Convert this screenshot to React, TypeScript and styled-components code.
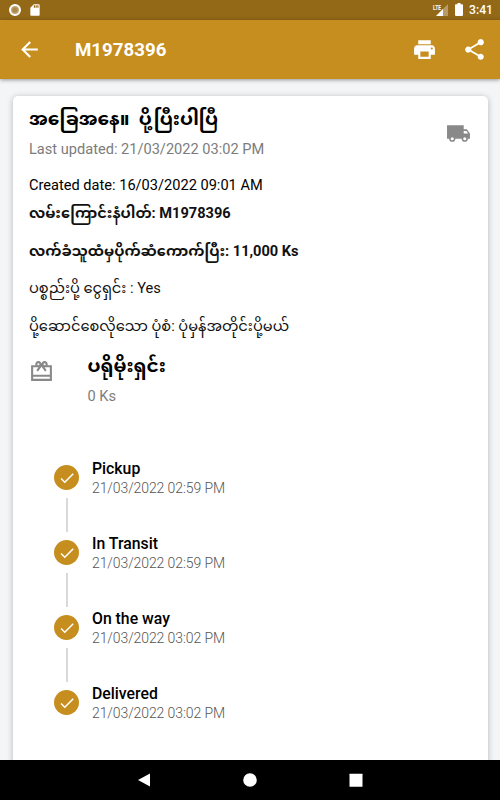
import React from "react";
import styled, { createGlobalStyle } from "styled-components";
import { MdArrowBack, MdPrint, MdShare, MdCheck, MdSdCard } from "react-icons/md";

const GlobalStyle = createGlobalStyle`
  * { box-sizing: border-box; }
  body { margin: 0; background: #f4f5f7; font-family: Roboto, "Noto Sans Myanmar", "Noto Sans", sans-serif; }
`;

const Screen = styled.div`
  width: 500px;
  height: 800px;
  display: flex;
  flex-direction: column;
  overflow: hidden;
  background: #f4f5f7;
`;

const StatusBar = styled.div`
  height: 20px;
  flex: none;
  display: flex;
  align-items: center;
  padding: 0 8px 0 9px;
  background: #936816;
  color: #fff;
`;

const RecordDot = styled.span`
  width: 12px;
  height: 12px;
  margin-right: 7px;
  border-radius: 50%;
  border: 2px solid #fff;
  background: radial-gradient(circle, #ad8747 30%, #d9c7a6 100%);
`;

const Signal = styled.svg`
  margin-left: auto;
  margin-right: 6px;
`;

const Battery = styled.svg`
  margin-right: 6px;
  margin-bottom: 2px;
`;

const Clock = styled.span`
  width: 23px;
  font-size: 12.2px;
  font-weight: 500;
  line-height: 20px;
  white-space: nowrap;
`;

const AppBar = styled.header`
  height: 59px;
  flex: none;
  display: flex;
  align-items: center;
  padding: 0 13px 0 17px;
  background: #c68e1e;
  color: #fff;
  box-shadow: 0 1px 4px rgba(0, 0, 0, 0.4);
  z-index: 1;

  svg { display: block; }
`;

const Title = styled.h1`
  flex: 1;
  margin: 0 0 0 33px;
  font-size: 18.7px;
  font-weight: 700;
  line-height: 24px;
`;

const Actions = styled.div`
  display: flex;
  gap: 25px;
`;

const Content = styled.main`
  flex: 1;
  min-height: 0;
  overflow: hidden;
  padding: 17px 12.5px 0;
`;

const Card = styled.section`
  height: 720px;
  padding: 8px 16.5px 0;
  border-radius: 5px;
  background: #fff;
  box-shadow: 0 1px 6px rgba(0, 0, 0, 0.26);
`;

const CardHead = styled.div`
  display: flex;
  justify-content: space-between;
  align-items: center;
  height: 60px;
  color: #898989;
`;

const Truck = styled.svg`
  display: block;
  margin-bottom: 1px;
`;

const Text = styled.div<{ $size?: number; $weight?: number; $color?: string; $height?: number; $gap?: number; $track?: number }>`
  height: ${(p) => p.$height ?? 28}px;
  margin-top: ${(p) => p.$gap ?? 0}px;
  line-height: ${(p) => p.$height ?? 28}px;
  font-size: ${(p) => p.$size ?? 14.6}px;
  font-weight: ${(p) => p.$weight ?? 400};
  letter-spacing: ${(p) => p.$track ?? 0}px;
  color: ${(p) => p.$color ?? "#111"};
  white-space: nowrap;
`;

const GiftRow = styled.div`
  display: flex;
  margin-top: 11px;
  height: 105px;
  color: #898989;
`;

const GiftIcon = styled.div`
  width: 58.5px;
  padding-top: 8px;

  svg { display: block; }
`;

const Steps = styled.ol`
  margin: 0;
  padding: 0 0 0 25px;
  list-style: none;
`;

const Step = styled.li`
  display: flex;
  height: 75px;
`;

const StepInfo = styled.div`
  padding-top: 1px;
`;

const Rail = styled.div`
  width: 25px;
  margin-right: 13px;
  padding-top: 9px;
  display: flex;
  flex-direction: column;
  align-items: center;
`;

const Badge = styled.span`
  width: 25px;
  height: 25px;
  flex: none;
  display: flex;
  align-items: center;
  justify-content: center;
  border-radius: 50%;
  background: #c68e1e;
  color: #fff;
`;

const Connector = styled.span`
  width: 2px;
  height: 34px;
  margin-top: 8px;
  flex: none;
  background: #d9d9d9;
`;

const NavBar = styled.nav`
  height: 40px;
  flex: none;
  display: flex;
  align-items: center;
  justify-content: center;
  gap: 92px;
  background: #000;
  z-index: 1;
`;

const steps = [
  { name: "Pickup", time: "21/03/2022 02:59 PM" },
  { name: "In Transit", time: "21/03/2022 02:59 PM" },
  { name: "On the way", time: "21/03/2022 03:02 PM" },
  { name: "Delivered", time: "21/03/2022 03:02 PM" },
];

export default function App() {
  return (
    <>
      <GlobalStyle />
      <Screen>
        <StatusBar>
          <RecordDot />
          <MdSdCard size={14} />
          <Signal width="17" height="15" viewBox="0 0 17 15">
            <path d="M16 1v12H4z" fill="#fff" opacity=".35" />
            <path d="M11 6v7H4z" fill="#fff" />
            <text x="1" y="6.5" fontSize="7" fontFamily="Roboto" fontWeight="700" fill="#fff" textLength="8" lengthAdjust="spacingAndGlyphs">LTE</text>
          </Signal>
          <Battery width="8" height="13" viewBox="0 0 8 13">
            <path d="M2.5 0h3v1.3H7.2a.8.8 0 0 1 .8.8v10a.8.8 0 0 1-.8.8H.8a.8.8 0 0 1-.8-.8v-10a.8.8 0 0 1 .8-.8h1.7z" fill="#fff" />
          </Battery>
          <Clock>3:41</Clock>
        </StatusBar>
        <AppBar>
          <MdArrowBack size={25} />
          <Title>M1978396</Title>
          <Actions>
            <MdPrint size={25} />
            <MdShare size={25} />
          </Actions>
        </AppBar>
        <Content>
          <Card>
            <CardHead>
              <div>
                <Text $size={18.6} $weight={700} $height={30} $color="#000">အခြေအနေ။&nbsp; ပို့ပြီးပါပြီ</Text>
                <Text $height={30} $color="#7c7c7c">Last updated: 21/03/2022 03:02 PM</Text>
              </div>
              <Truck width="25" height="25" viewBox="0 0 24 24" fill="currentColor">
                <path d="M20 8h-3V4H1v13h2a3 3 0 0 0 6 0h6a3 3 0 0 0 6 0h2v-5zM6 18.5a1.5 1.5 0 1 1 0-3 1.5 1.5 0 0 1 0 3zm13.5-9 1.96 2.5H17V9.500zM18 18.500a1.500 1.500 0 1 1 0-3 1.500 1.500 0 0 1 0 3z" />
              </Truck>
            </CardHead>
            <Text $gap={7} $color="#000">Created date: 16/03/2022 09:01 AM</Text>
            <Text $weight={700}>လမ်းကြောင်းနံပါတ်: M1978396</Text>
            <Text $weight={700} $gap={10}>လက်ခံသူထံမှပိုက်ဆံကောက်ပြီး: 11,000 Ks</Text>
            <Text $gap={9}>ပစ္စည်းပို့ ငွေရှင်း : Yes</Text>
            <Text $gap={10}>ပို့ဆောင်စေလိုသော ပုံစံ: ပုံမှန်အတိုင်းပို့မယ်</Text>
            <GiftRow>
              <GiftIcon>
                <svg width="25" height="25" viewBox="0 0 24 24" fill="currentColor">
                  <path d="M22 6h-4.18A3 3 0 0 0 15 2c-1.05 0-1.96.54-2.5 1.35L12 4.02l-.5-.68A3 3 0 0 0 9 2a3 3 0 0 0-2.82 4H2v15h20zm-7-2a1 1 0 1 1 0 2 1 1 0 0 1 0-2zM9 4a1 1 0 1 1 0 2 1 1 0 0 1 0-2zm11 15H4v-2h16zm0-4H4V8h5.08L7 10.83 8.62 12 12 7.4l3.38 4.6L17 10.83 14.92 8H20z" />
                </svg>
              </GiftIcon>
              <div>
                <Text $size={18.6} $weight={700} $height={30} $color="#000">ပရိုမိုးရှင်း</Text>
                <Text $height={30} $color="#7c7c7c">0 Ks</Text>
              </div>
            </GiftRow>
            <Steps>
              {steps.map((s, i) => (
                <Step key={s.name}>
                  <Rail>
                    <Badge><MdCheck size={18} /></Badge>
                    {i < steps.length - 1 && <Connector />}
                  </Rail>
                  <StepInfo>
                    <Text $size={15.8} $weight={500} $height={24} $color="#000">{s.name}</Text>
                    <Text $size={14} $weight={300} $height={15} $color="#555" $track={-0.1}>{s.time}</Text>
                  </StepInfo>
                </Step>
              ))}
            </Steps>
          </Card>
        </Content>
        <NavBar>
          <svg width="14" height="14" viewBox="0 0 14 14"><path d="M13 .5v13L1 7z" fill="#fff" /></svg>
          <svg width="14" height="14" viewBox="0 0 14 14"><circle cx="7" cy="7" r="6.8" fill="#fff" /></svg>
          <svg width="14" height="14" viewBox="0 0 14 14"><rect x=".5" y=".7" width="13" height="13" rx=".5" fill="#fff" /></svg>
        </NavBar>
      </Screen>
    </>
  );
}
